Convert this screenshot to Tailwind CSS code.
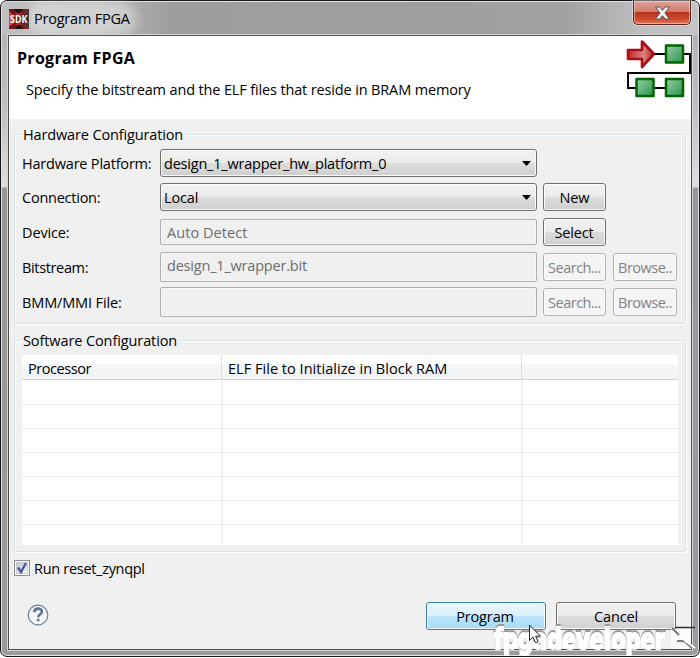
<!DOCTYPE html>
<html lang="en">
<head>
<meta charset="utf-8">
<title>Program FPGA</title>
<script src="https://cdn.jsdelivr.net/npm/@tailwindcss/browser@4"></script>
</head>
<body class="h-[658px] w-[700px] overflow-hidden bg-white font-['Open_Sans','Noto_Sans',sans-serif] text-[14.5px] leading-5 tracking-[-0.14px] text-black">
<div class="relative flex h-[657px] w-[700px] flex-col rounded-[7px] border border-[#15151a] bg-[linear-gradient(180deg,#c6c6c8_0,#b5b5b7_35px,#bdbdbd_100px,#dedede_186px,#979797_187px,#9b9b9b_100%)] px-[7px] shadow-[inset_0_0_0_1px_#e2e2e2]">
  <header class="-mx-[6px] mt-px flex h-[33px] shrink-0 items-start justify-between rounded-t-[6px] bg-[linear-gradient(90deg,#c0c0c0_0,#b8b8b8_100px,#9d9d9d_170px,#a0a0a0_560px,#bebebe_640px,#c4c4c4_100%)] px-[7px]">
    <div class="mt-[6px] flex items-center gap-[5px]">
      <svg class="overflow-visible" width="20" height="20" viewBox="0 0 20 20"><rect width="20" height="20" fill="#171313"/><path d="M0 0h5l5 5 4-5h6l-5 7 1 6 4 7h-6l-4-5-4 5H0z" fill="#701519"/><path d="M0 2l5 5v7l-5 4z" fill="#e04038"/><path d="M5 4h9l-4 4zM5 16h9l-4-3z" fill="#b5202a"/><text x="1" y="14" font-size="10" font-weight="700" letter-spacing="0" fill="#fff" textLength="17.500" lengthAdjust="spacingAndGlyphs">SDK</text></svg>
      <span class="rounded-full bg-white/35 pt-px tracking-[-0.22px] shadow-[0_0_9px_7px_rgba(255,255,255,0.35)]">Program FPGA</span>
    </div>
    <button class="-mt-px flex h-[24px] w-[58px] items-center justify-center rounded-b-[5px] border border-t-0 border-[#5a2520] bg-[linear-gradient(180deg,#dda39a_0,#d0786b_48%,#b8331e_50%,#cf4c30_80%,#e07a59_100%)] shadow-[inset_0_0_0_1px_#ffffff70,0_0_0_1px_#ffffff60]">
      <svg width="17" height="14" viewBox="0 0 17 14"><path d="M1.500 1h4.300l2.700 3.300L11.200 1h4.300l-4.600 6 4.600 6h-4.300L8.500 9.700 5.800 13H1.500l4.600-6z" fill="#f4f4f4" stroke="#555"/></svg>
    </button>
  </header>
  <main class="flex h-[615px] w-[684px] shrink-0 flex-col border border-[#4f4f4f] bg-[#f0f0f0] shadow-[0_0_0_1px_#d5d5d5]">
    <section class="flex h-[83px] shrink-0 justify-between bg-white">
      <div class="pl-2 pt-[12px]">
        <h1 class="text-[16px] font-bold leading-5 tracking-[0.3px]">Program FPGA</h1>
        <p class="mt-[12px] pl-[9px]">Specify the bitstream and the ELF files that reside in BRAM memory</p>
      </div>
      <svg class="mt-[2px] shrink-0" width="65" height="62" viewBox="0 0 65 62"><defs><linearGradient id="g" x1="0" y1="0" x2="1" y2="1"><stop offset="0" stop-color="#9ed0a8"/><stop offset="1" stop-color="#23924a"/></linearGradient><linearGradient id="r"><stop offset="0" stop-color="#c0282c"/><stop offset=".6" stop-color="#dc8484"/><stop offset="1" stop-color="#b01a20"/></linearGradient></defs><path d="M28 16H64V35H2V50H50" fill="none" stroke="#000" stroke-width="2"/><path d="M2 12h14V3.500l12 12.500-12 13v-8H2z" fill="url(#r)" stroke="#a80f16" stroke-width="2.600" stroke-linejoin="round"/><g fill="url(#g)" stroke="#006500" stroke-width="2.500" stroke-linejoin="round"><rect x="40" y="7.500" width="17" height="17"/><rect x="10.500" y="41" width="17" height="17"/><rect x="40" y="41" width="17" height="17"/></g></svg>
    </section>

    <section class="relative mx-[5px] mt-[15px] flex h-[190px] shrink-0 flex-col rounded-[3px] border border-[#d5dfe5] pl-[7px] pt-[14px] shadow-[inset_1px_1px_0_#fff,1px_1px_0_#fff]">
      <h2 class="absolute -top-[10px] left-[6px] bg-[#f0f0f0] px-[2px]">Hardware Configuration</h2>
      <div class="flex h-[28px] items-center">
        <span class="w-[138px] pt-px tracking-[-0.2px]">Hardware Platform:</span>
        <div class="flex h-[28px] w-[377px] items-center justify-between rounded-[3px] border border-[#707070] bg-[linear-gradient(180deg,#f2f2f2_0,#ebebeb_48%,#dddddd_50%,#cfcfcf_100%)] pl-[3px] pr-[5px] shadow-[inset_0_0_0_1px_#fbfbfb]"><span class="pt-px tracking-[-0.21px]">design_1_wrapper_hw_platform_0</span><svg width="9" height="5" viewBox="0 0 9 5"><path d="M0 0h9L4.500 5z"/></svg></div>
      </div>
      <div class="mt-[6px] flex h-[28px] items-center">
        <span class="w-[138px] pt-px tracking-[-0.24px]">Connection:</span>
        <div class="flex h-[28px] w-[377px] items-center justify-between rounded-[3px] border border-[#707070] bg-[linear-gradient(180deg,#f2f2f2_0,#ebebeb_48%,#dddddd_50%,#cfcfcf_100%)] pl-[3px] pr-[5px] shadow-[inset_0_0_0_1px_#fbfbfb]"><span class="pt-px">Local</span><svg width="9" height="5" viewBox="0 0 9 5"><path d="M0 0h9L4.500 5z"/></svg></div>
        <button class="ml-[6px] h-[28px] w-[63px] rounded-[3px] border border-[#707070] bg-[linear-gradient(180deg,#f2f2f2_0,#ebebeb_48%,#dddddd_50%,#cfcfcf_100%)] pt-px shadow-[inset_0_0_0_1px_#fbfbfb]">New</button>
      </div>
      <div class="mt-[7px] flex h-[28px] items-center">
        <span class="w-[138px] pt-px">Device:</span>
        <div class="flex h-[26px] w-[377px] items-center rounded-[2px] border border-[#afafaf] pl-[6px] pt-px tracking-[0.05px] text-[#6d6d6d] shadow-[inset_0_0_0_1px_#f8f8f8]">Auto Detect</div>
        <button class="ml-[6px] h-[28px] w-[63px] rounded-[3px] border border-[#707070] bg-[linear-gradient(180deg,#f2f2f2_0,#ebebeb_48%,#dddddd_50%,#cfcfcf_100%)] pr-px pt-px shadow-[inset_0_0_0_1px_#fbfbfb]">Select</button>
      </div>
      <div class="mt-[6px] flex h-[30px] items-center">
        <span class="w-[138px] pt-px tracking-[-0.35px]">Bitstream:</span>
        <div class="flex h-[30px] w-[377px] items-center rounded-[2px] border border-[#afafaf] pb-[2px] pl-[6px] tracking-[-0.2px] text-[#6d6d6d] shadow-[inset_0_0_0_1px_#f8f8f8]">design_1_wrapper.bit</div>
        <button class="ml-[6px] h-[28px] w-[63px] rounded-[3px] border border-[#adb2b5] bg-[#f4f4f4] pt-px tracking-[-0.5px] text-[#838383] shadow-[inset_0_0_0_1px_#fcfcfc]">Search...</button>
        <button class="ml-[7px] h-[28px] w-[64px] rounded-[3px] border border-[#adb2b5] bg-[#f4f4f4] pt-px tracking-[-0.5px] text-[#838383] shadow-[inset_0_0_0_1px_#fcfcfc]">Browse..</button>
      </div>
      <div class="mt-[5px] flex h-[30px] items-center">
        <span class="w-[138px] pt-px">BMM/MMI File:</span>
        <div class="h-[30px] w-[377px] rounded-[2px] border border-[#afafaf] shadow-[inset_0_0_0_1px_#f8f8f8]"></div>
        <button class="ml-[6px] h-[28px] w-[63px] rounded-[3px] border border-[#adb2b5] bg-[#f4f4f4] pt-px tracking-[-0.5px] text-[#838383] shadow-[inset_0_0_0_1px_#fcfcfc]">Search...</button>
        <button class="ml-[7px] h-[28px] w-[64px] rounded-[3px] border border-[#adb2b5] bg-[#f4f4f4] pt-px tracking-[-0.5px] text-[#838383] shadow-[inset_0_0_0_1px_#fcfcfc]">Browse..</button>
      </div>
    </section>

    <section class="relative mx-[5px] mt-[16px] h-[212px] shrink-0 rounded-[3px] border border-[#d5dfe5] pl-[7px] pt-[14px] shadow-[inset_1px_1px_0_#fff,1px_1px_0_#fff]">
      <h2 class="absolute -top-[10px] left-[6px] bg-[#f0f0f0] px-[2px] tracking-[-0.1px]">Software Configuration</h2>
      <div class="flex h-[190px] w-[656px] flex-col bg-white">
        <div class="grid h-[25px] shrink-0 grid-cols-[200px_300px_156px] border-b border-[#d2d2d2] bg-[linear-gradient(180deg,#fff_0,#fff_9px,#f6f7f9_9px,#f1f2f4_100%)]">
          <span class="border-r border-[#dedfe1] pl-[6px] pt-[4px] tracking-[-0.45px]">Processor</span>
          <span class="border-r border-[#dedfe1] pl-[6px] pt-[4px] tracking-[0.03px]">ELF File to Initialize in Block RAM</span>
          <span></span>
        </div>
        <div class="grid flex-1 grid-cols-[199px_2px_298px_2px_155px] grid-rows-[25px_24px_24px_24px_24px_24px_20px]">
          <i class="border-b border-[#ededed]"></i><i class="row-span-7 bg-[#edf1f6]"></i><i class="border-b border-[#ededed]"></i><i class="row-span-7 bg-[#edf1f6]"></i><i class="border-b border-[#ededed]"></i>
          <i class="border-b border-[#ededed]"></i><i class="border-b border-[#ededed]"></i><i class="border-b border-[#ededed]"></i>
          <i class="border-b border-[#ededed]"></i><i class="border-b border-[#ededed]"></i><i class="border-b border-[#ededed]"></i>
          <i class="border-b border-[#ededed]"></i><i class="border-b border-[#ededed]"></i><i class="border-b border-[#ededed]"></i>
          <i class="border-b border-[#ededed]"></i><i class="border-b border-[#ededed]"></i><i class="border-b border-[#ededed]"></i>
          <i class="border-b border-[#ededed]"></i><i class="border-b border-[#ededed]"></i><i class="border-b border-[#ededed]"></i>
        </div>
      </div>
    </section>

    <label class="mt-[6px] flex h-[20px] shrink-0 items-center gap-[4px] pl-[5px]">
      <svg class="-mt-px" width="16" height="16" viewBox="0 0 16 16"><defs><linearGradient id="c" x1="0" y1="0" x2="1" y2="1"><stop offset="0" stop-color="#bfc5ce"/><stop offset="1" stop-color="#f4f5f7"/></linearGradient></defs><rect x=".5" y=".5" width="15" height="15" fill="#fafafa" stroke="#8e8f8f"/><rect x="2.500" y="2.500" width="11" height="11" fill="url(#c)" stroke="#c5c9d0"/><path d="M4 7.500l3 4.500 5-9" fill="none" stroke="#42549c" stroke-width="2.300"/></svg>
      <span class="pt-px tracking-[-0.3px]">Run reset_zynqpl</span>
    </label>
    <footer class="mt-[24px] flex h-[28px] shrink-0 items-center pl-[18px] pr-[15px]">
      <svg class="-mt-[2px] mr-auto overflow-visible" width="22" height="22" viewBox="0 0 22 22"><circle cx="11" cy="11" r="9.800" fill="#f6f7f8" stroke="#6b7b96" stroke-width="1.200"/><path d="M7.300 8.300C7.300 3.500 14.900 3.600 14.900 7.700C14.900 10.300 11.200 10.200 11.200 13.200" fill="none" stroke="#62728f" stroke-width="2.600"/><rect x="9.900" y="14.700" width="2.600" height="2.500" fill="#62728f"/></svg>
      <button class="h-[28px] w-[120px] rounded-[3px] border border-[#3c7fb1] bg-[linear-gradient(180deg,#eaf6fd_0,#d9f0fc_48%,#bee6fd_50%,#a7d9f5_100%)] pr-[2px] pt-px shadow-[inset_0_0_0_1px_#f3fbff]">Program</button>
      <button class="ml-[10px] h-[28px] w-[120px] rounded-[3px] border border-[#707070] bg-[linear-gradient(180deg,#f2f2f2_0,#ebebeb_48%,#dddddd_50%,#cfcfcf_100%)] pt-px shadow-[inset_0_0_0_1px_#fbfbfb]">Cancel</button>
    </footer>
  </main>
  <!-- site watermark -->
  <svg class="pointer-events-none absolute left-[483px] top-[609px] overflow-visible" width="216" height="48" viewBox="484 610 216 48">
    <text class="drop-shadow-[0_-2px_0_#9a9a9a]" x="494" y="648.500" font-family="'DejaVu Sans Condensed','DejaVu Sans',sans-serif" font-weight="700" font-size="29" letter-spacing="0" fill="#fff" stroke="#fff" stroke-width="2" textLength="171" lengthAdjust="spacingAndGlyphs">fpgadeveloper</text>
    <path d="M671 629h20v20h-20z" fill="#fff" fill-opacity=".75"/>
    <path d="M675 627.500h20" stroke="#333" stroke-width="1.500"/>
    <path d="M672 628l7 7M677 641h7l8 7" fill="none" stroke="#777" stroke-width="2"/>
    <path d="M684 640l11 8" stroke="#fff" stroke-width="2"/>
  </svg>
  <!-- mouse pointer -->
  <svg class="pointer-events-none absolute left-[527px] top-[623px]" width="14" height="21" viewBox="0 0 14 21"><path d="M1.500 1v15.500l3.600-3.400 2.400 5.700 2.600-1.100-2.400-5.500h4.800z" fill="#fff" stroke="#222"/></svg>
</div>
</body>
</html>
